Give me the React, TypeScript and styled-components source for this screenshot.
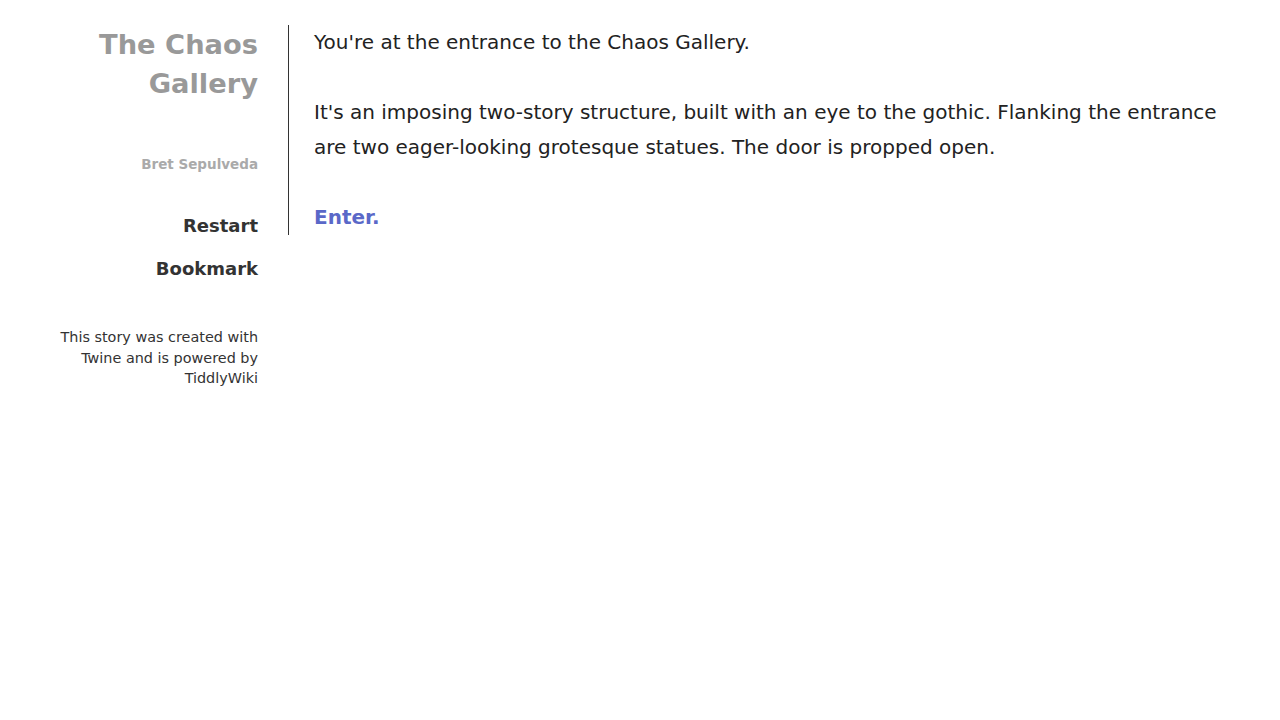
import styled, { createGlobalStyle } from "styled-components";

const GlobalStyle = createGlobalStyle`
  html, body {
    margin: 0;
    padding: 0;
    background: #fff;
  }
  body {
    font-family: "DejaVu Sans", Verdana, sans-serif;
  }
`;

const Page = styled.div`
  display: flex;
  align-items: flex-start;
  padding-top: 25px;
`;

const Sidebar = styled.div`
  width: 218px;
  margin-left: 40px;
  margin-right: 30px;
  text-align: right;
  display: flex;
  flex-direction: column;
  align-items: flex-end;
`;

const Title = styled.h1`
  margin: 0;
  font-size: 27.3px;
  line-height: 39px;
  font-weight: bold;
  color: #999;
`;

const Author = styled.div`
  margin-top: 54px;
  font-size: 13.5px;
  line-height: 15px;
  font-weight: bold;
  color: #aaa;
`;

const Menu = styled.ul`
  list-style: none;
  margin: 42px 0 0;
  padding: 0;
  display: flex;
  flex-direction: column;
  gap: 20px;
`;

const MenuItem = styled.li`
  font-size: 18px;
  font-weight: bold;
  color: #333;
  line-height: 23px;
`;

const Credits = styled.div`
  margin-top: 47px;
  font-size: 14.4px;
  line-height: 20.5px;
  color: #333;
`;

const Passage = styled.div`
  border-left: 1px solid #333;
  padding-left: 25px;
  padding-right: 40px;
  flex: 1;
`;

const Para = styled.p<{ $last?: boolean }>`
  margin: 0 0 ${(p) => (p.$last ? "0" : "35px")};
  font-size: 20px;
  line-height: 35px;
  color: #222;
`;

const Link = styled.a`
  color: #5a68c8;
  font-weight: bold;
  text-decoration: none;
`;

export default function App() {
  return (
    <>
      <GlobalStyle />
      <Page>
        <Sidebar>
          <Title>
            The Chaos
            <br />
            Gallery
          </Title>
          <Author>Bret Sepulveda</Author>
          <Menu>
            <MenuItem>Restart</MenuItem>
            <MenuItem>Bookmark</MenuItem>
          </Menu>
          <Credits>
            This story was created with
            <br />
            Twine and is powered by
            <br />
            TiddlyWiki
          </Credits>
        </Sidebar>
        <Passage>
          <Para>You're at the entrance to the Chaos Gallery.</Para>
          <Para>
            It's an imposing two-story structure, built with an eye to the
            gothic. Flanking the entrance are two eager-looking grotesque
            statues. The door is propped open.
          </Para>
          <Para $last>
            <Link href="#">Enter.</Link>
          </Para>
        </Passage>
      </Page>
    </>
  );
}
